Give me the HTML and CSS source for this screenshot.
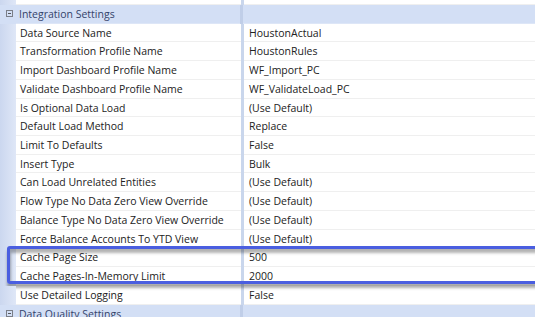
FILE: index.html
```html
<!DOCTYPE html>
<html lang="en">

<head>
  <meta charset="UTF-8">
  <meta name="viewport" content="width=device-width, initial-scale=1.0">
  <title>Integration Settings</title>
  <link rel="stylesheet" href="styles.css">
</head>

<body>
  <div class="grid">
    <div class="row stub">
      <div class="gutter"></div>
      <div class="label"></div>
      <div class="split"></div>
      <div class="value"></div>
    </div>

    <div class="row group">
      <div class="gutter"><span class="toggle"></span></div>
      <div class="label">Integration Settings</div>
      <div class="split"></div>
      <div class="value"></div>
    </div>

    <div class="row"><div class="gutter"></div><div class="label">Data Source Name</div><div class="split"></div><div class="value">HoustonActual</div></div>
    <div class="row"><div class="gutter"></div><div class="label">Transformation Profile Name</div><div class="split"></div><div class="value">HoustonRules</div></div>
    <div class="row"><div class="gutter"></div><div class="label">Import Dashboard Profile Name</div><div class="split"></div><div class="value">WF_Import_PC</div></div>
    <div class="row"><div class="gutter"></div><div class="label">Validate Dashboard Profile Name</div><div class="split"></div><div class="value">WF_ValidateLoad_PC</div></div>
    <div class="row"><div class="gutter"></div><div class="label">Is Optional Data Load</div><div class="split"></div><div class="value">(Use Default)</div></div>
    <div class="row"><div class="gutter"></div><div class="label">Default Load Method</div><div class="split"></div><div class="value">Replace</div></div>
    <div class="row"><div class="gutter"></div><div class="label">Limit To Defaults</div><div class="split"></div><div class="value">False</div></div>
    <div class="row"><div class="gutter"></div><div class="label">Insert Type</div><div class="split"></div><div class="value">Bulk</div></div>
    <div class="row"><div class="gutter"></div><div class="label">Can Load Unrelated Entities</div><div class="split"></div><div class="value">(Use Default)</div></div>
    <div class="row"><div class="gutter"></div><div class="label">Flow Type No Data Zero View Override</div><div class="split"></div><div class="value">(Use Default)</div></div>
    <div class="row"><div class="gutter"></div><div class="label">Balance Type No Data Zero View Override</div><div class="split"></div><div class="value">(Use Default)</div></div>
    <div class="row"><div class="gutter"></div><div class="label">Force Balance Accounts To YTD View</div><div class="split"></div><div class="value">(Use Default)</div></div>

    <div class="marked">
      <div class="row"><div class="gutter"></div><div class="label">Cache Page Size</div><div class="split"></div><div class="value">500</div></div>
      <div class="row"><div class="gutter"></div><div class="label">Cache Pages-In-Memory Limit</div><div class="split"></div><div class="value">2000</div></div>
      <div class="callout"></div>
    </div>

    <div class="row"><div class="gutter"></div><div class="label">Use Detailed Logging</div><div class="split"></div><div class="value">False</div></div>

    <div class="row group">
      <div class="gutter"><span class="toggle"></span></div>
      <div class="label">Data Quality Settings</div>
      <div class="split"></div>
      <div class="value"></div>
    </div>
  </div>
</body>

</html>
```

FILE: styles.css
```css
body {
  margin: 0;
  padding: 0;
  background: #fff;
  font-family: "Open Sans", "Noto Sans", sans-serif;
  font-size: 10.5px;
  color: #222;
  overflow: hidden;
}

.grid {
  width: 535px;
}

.row {
  display: flex;
  height: 18.73px;
  line-height: 18px;
}

.row.stub {
  height: 5px;
}

.gutter {
  flex: 0 0 16px;
  background: linear-gradient(to right, #cbd7ef, #dfe7f7);
  position: relative;
}

.label {
  flex: 0 0 221px;
  padding-left: 4px;
  white-space: nowrap;
  overflow: hidden;
  border-bottom: 1px solid #efefef;
}

.split {
  flex: 0 0 3px;
  background: #c9d6ec;
}

.value {
  flex: 1;
  padding-left: 5px;
  white-space: nowrap;
  border-bottom: 1px solid #efefef;
}

.group {
  background: #d3dff5;
  color: #34436a;
}

.group .gutter {
  background: #d3dff5;
}

.group .label {
  padding-left: 3px;
  border-bottom: 1px solid #dde6f7;
}

.group .value {
  border-bottom: 1px solid #dde6f7;
}

.group .split {
  background: #c0cee8;
}

.toggle {
  position: absolute;
  left: 6px;
  top: 5px;
  width: 7px;
  height: 7px;
  border: 1px solid #7b7f88;
  box-sizing: border-box;
}

.toggle::after {
  content: "";
  position: absolute;
  left: 1px;
  right: 1px;
  top: 2px;
  height: 1px;
  background: #55595f;
}

.marked {
  position: relative;
}

.callout {
  position: absolute;
  left: 7px;
  right: -20px;
  top: -2px;
  bottom: 2px;
  border: 3px solid #4a5ee0;
  border-radius: 3px;
  box-shadow: 0 4px 3px rgba(0, 0, 0, 0.32), inset 1px 4px 3px rgba(0, 0, 0, 0.3);
  pointer-events: none;
}
```
